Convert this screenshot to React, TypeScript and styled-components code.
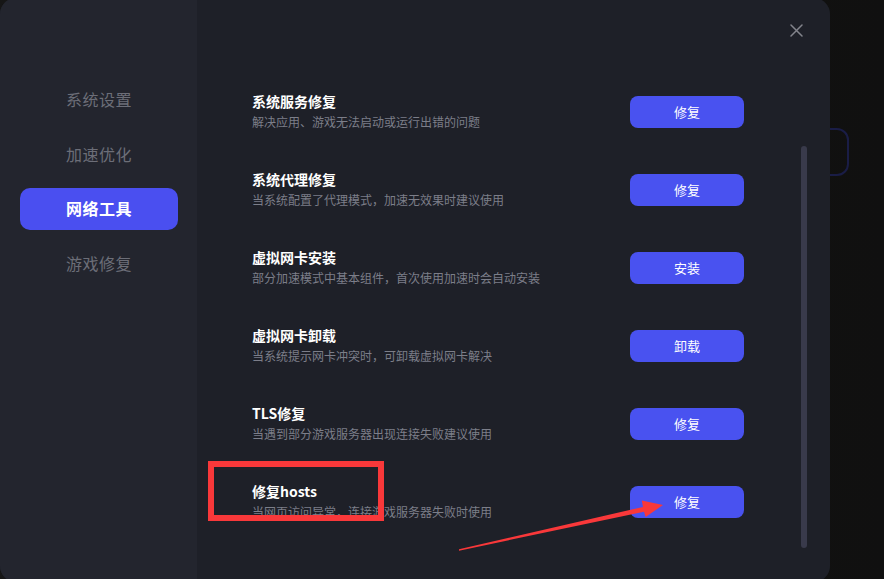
import styled, { createGlobalStyle } from 'styled-components';

const GlobalStyle = createGlobalStyle`
    html, body {
        margin: 0;
        padding: 0;
        background: #131312;
    }

    * {
        box-sizing: border-box;
    }
`;

const Page = styled.div`
    position: relative;
    display: flex;
    width: 884px;
    height: 579px;
    overflow: hidden;
    background: linear-gradient(90deg, #161616 0%, #13120f 60%, #101010 100%);
    font-family: 'Noto Sans CJK SC', 'Noto Sans', sans-serif;
`;

/* card of the page underneath, mostly hidden by the dialog */
const UnderlyingCard = styled.div`
    position: absolute;
    left: 760px;
    top: 128px;
    width: 89px;
    height: 48px;
    border: 2px solid #1a1d46;
    border-radius: 12px;
`;

const Dialog = styled.div`
    position: relative;
    display: flex;
    width: 830px;
    height: 584px;
    margin-top: -2px;
    border-radius: 16px;
    overflow: hidden;
    background: #1e2028;
`;

const Sidebar = styled.nav`
    display: flex;
    flex-direction: column;
    gap: 12.5px;
    width: 197px;
    padding: 81px 19px 0 20px;
    background: #23252e;
`;

const NavItem = styled.div<{ $active?: boolean }>`
    display: flex;
    align-items: center;
    justify-content: center;
    height: 42px;
    padding-bottom: 2px;
    border-radius: 10px;
    font-size: 16px;
    letter-spacing: 0.5px;
    font-weight: ${({ $active }) => ($active ? 700 : 400)};
    color: ${({ $active }) => ($active ? '#ffffff' : '#6c6e78')};
    background: ${({ $active }) => ($active ? '#4a4ff0' : 'transparent')};
`;

const Main = styled.div`
    display: flex;
    flex-direction: column;
    flex: 1;
    padding: 22px 23px 0 55px;
`;

const Header = styled.div`
    display: flex;
    justify-content: flex-end;
    height: 20px;
    margin-bottom: 33px;
`;

const CloseButton = styled.button`
    display: flex;
    align-items: center;
    justify-content: center;
    width: 20px;
    height: 20px;
    margin-right: 1px;
    padding: 0;
    border: none;
    background: transparent;
    color: #83848c;
    cursor: pointer;
`;

const Body = styled.div`
    display: flex;
    flex: 1;
`;

const List = styled.div`
    display: flex;
    flex-direction: column;
    flex: 1;
    padding-right: 57px;
`;

const Row = styled.div`
    display: flex;
    align-items: center;
    justify-content: space-between;
    height: 78px;
`;

const Texts = styled.div`
    display: flex;
    flex-direction: column;
    gap: 2px;
    margin-top: -3px;
`;

const Title = styled.div`
    font-size: 14px;
    line-height: 20px;
    font-weight: 700;
    color: #ffffff;
`;

const Desc = styled.div`
    font-size: 12px;
    line-height: 18px;
    color: #7c7e89;
`;

const ActionButton = styled.button`
    width: 114px;
    height: 32px;
    padding: 0 0 2px;
    border: none;
    border-radius: 8px;
    background: #4952f0;
    color: #ffffff;
    font-family: inherit;
    font-size: 13px;
    cursor: pointer;
`;

const ScrollThumb = styled.div`
    width: 6px;
    height: 402px;
    margin-top: 73px;
    border-radius: 3px;
    background: #393a4b;
`;

/* red markup drawn on top of the screenshot */
const Annotation = styled.svg`
    position: absolute;
    left: 0;
    top: 0;
    pointer-events: none;
`;

const navItems = [
    { key: 'system', label: '系统设置' },
    { key: 'boost', label: '加速优化' },
    { key: 'network', label: '网络工具' },
    { key: 'game', label: '游戏修复' },
];

const tools = [
    { title: '系统服务修复', desc: '解决应用、游戏无法启动或运行出错的问题', action: '修复' },
    { title: '系统代理修复', desc: '当系统配置了代理模式，加速无效果时建议使用', action: '修复' },
    { title: '虚拟网卡安装', desc: '部分加速模式中基本组件，首次使用加速时会自动安装', action: '安装' },
    { title: '虚拟网卡卸载', desc: '当系统提示网卡冲突时，可卸载虚拟网卡解决', action: '卸载' },
    { title: 'TLS修复', desc: '当遇到部分游戏服务器出现连接失败建议使用', action: '修复' },
    { title: '修复hosts', desc: '当网页访问异常，连接游戏服务器失败时使用', action: '修复' },
];

export default function App() {
    const activeKey = 'network';

    return (
        <>
            <GlobalStyle />
            <Page>
                <UnderlyingCard />
                <Dialog>
                    <Sidebar>
                        {navItems.map(({ key, label }) => (
                            <NavItem key={key} $active={key === activeKey}>
                                {label}
                            </NavItem>
                        ))}
                    </Sidebar>
                    <Main>
                        <Header>
                            <CloseButton aria-label="关闭">
                                <svg width="13" height="13" viewBox="0 0 13 13">
                                    <path
                                        d="M1 1L12 12M12 1L1 12"
                                        stroke="currentColor"
                                        strokeWidth="1.5"
                                        strokeLinecap="round"
                                    />
                                </svg>
                            </CloseButton>
                        </Header>
                        <Body>
                            <List>
                                {tools.map(({ title, desc, action }) => (
                                    <Row key={title}>
                                        <Texts>
                                            <Title>{title}</Title>
                                            <Desc>{desc}</Desc>
                                        </Texts>
                                        <ActionButton>{action}</ActionButton>
                                    </Row>
                                ))}
                            </List>
                            <ScrollThumb />
                        </Body>
                    </Main>
                </Dialog>
                <Annotation width="884" height="579" viewBox="0 0 884 579">
                    <rect
                        x="211"
                        y="464"
                        width="170"
                        height="54"
                        fill="none"
                        stroke="#f9383a"
                        strokeWidth="6"
                    />
                    <polygon
                        points="459,550.7 644,511.7 645.6,517 663,505 641.8,500.5 643,506.9 459,549.3"
                        fill="#f9383a"
                    />
                </Annotation>
            </Page>
        </>
    );
}
